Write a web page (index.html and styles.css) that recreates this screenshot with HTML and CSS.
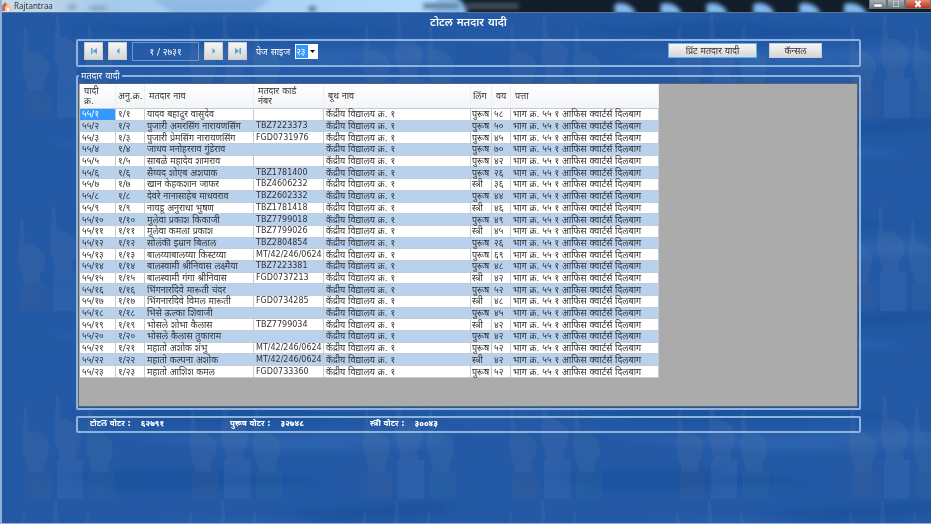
FILE: index.html
```html
<!DOCTYPE html>
<html lang="mr">
<head>
<meta charset="utf-8">
<title>Rajtantraa</title>
<link rel="stylesheet" href="styles.css">
</head>
<body>
<svg class="backdrop" aria-hidden="true">
  <defs>
    <filter id="soft" x="-20%" y="-50%" width="140%" height="200%"><feGaussianBlur stdDeviation="12 3"/></filter>
    <path id="fist" d="M2 2Q4-1 5 2L7 26Q11 23 14 27Q18 25 20 30Q26 32 27 40Q28 48 22 58L23 66H6Q5 58 1 48Q-1 40 1 30Z"/>
    <g id="hands">
      <use href="#fist" y="12" fill="#7e8fa5"/><rect x="3" y="78" width="26" height="27" fill="#6b6680"/>
      <use href="#fist" x="32" fill="#8592b0"/><rect x="35" y="66" width="26" height="39" fill="#6f95cc"/>
      <use href="#fist" x="64" y="12" fill="#7196a8"/><rect x="67" y="78" width="26" height="27" fill="#44809a"/>
    </g>
    <g id="band"><use href="#hands" x="22"/><use href="#hands" x="189"/><use href="#hands" x="363"/><use href="#hands" x="509"/><use href="#hands" x="676"/><use href="#hands" x="849"/></g>
    <pattern id="waves" width="487" height="192" patternUnits="userSpaceOnUse">
      <g filter="url(#soft)">
        <path d="M60 28L240 22L440 32L200 40Z" fill="#1e529e"/>
        <path d="M120 54L440 46V62L300 68Z" fill="#2b62ad"/>
        <path d="M50 90L190 84L340 98L130 108Z" fill="#1f539f"/>
        <path d="M280 128L450 116V130L330 138Z" fill="#1e529e"/>
        <path d="M50 142L260 136L420 154L180 164Z" fill="#2b62ad"/>
      </g>
    </pattern>
  </defs>
  <rect width="100%" height="100%" fill="url(#waves)"/>
  <g opacity=".12"><use href="#band" y="13"/><use href="#band" x="-4" y="206"/><use href="#band" y="394"/><use href="#band" x="-2" y="500"/></g>
</svg>

<header class="titlebar">
  <svg class="glass" width="931" height="12" preserveAspectRatio="none" viewBox="0 0 931 12" aria-hidden="true">
    <defs>
      <filter id="blur"><feGaussianBlur stdDeviation="2"/></filter>
      <linearGradient id="sky"><stop offset="0" stop-color="#c9dcea"/><stop offset=".25" stop-color="#a3c9ec"/><stop offset="1" stop-color="#b4dcff"/></linearGradient>
    </defs>
    <rect width="931" height="12" fill="#111d29"/>
    <rect width="443" height="12" fill="url(#sky)"/>
    <g filter="url(#blur)">
      <path d="M436-4H452Q465 0 466 16H430Z" fill="#8fc0ef"/>
      <path d="M150-2L172 14H250L270-2Z" fill="#8ebbe4"/>
      <ellipse cx="70" cy="7" rx="5" ry="3" fill="#8ca9c2"/><ellipse cx="96" cy="8" rx="10" ry="2" fill="#809db9"/>
      <ellipse cx="311" cy="9" rx="4" ry="3" fill="#5c7892"/>
      <rect x="422" y="3" width="36" height="6" fill="#64839f"/><rect x="466" y="3" width="52" height="6" fill="#424f5b"/>
      <path d="M614 14V4Q628 0 636 14Z" fill="#82baf2"/><path d="M660 14V4Q674 0 682 14Z" fill="#82baf2"/><path d="M753 14V4Q767 0 775 14Z" fill="#82baf2"/><path d="M706 14V4Q720 0 728 14Z" fill="#82baf2"/><path d="M799 14V4Q813 0 821 14Z" fill="#82baf2"/><path d="M844 14V4Q858 0 868 14Z" fill="#82baf2"/>
    </g>
  </svg>
  <svg class="app-icon" width="10" height="9" viewBox="0 0 10 9" aria-hidden="true"><path d="M0 4L3 0L6 4V9H0Z" fill="#c96a4a"/><path d="M3 5L6 2L10 5V9H3Z" fill="#f4c79e"/><path d="M5 6H7V9H5Z" fill="#fff"/></svg>
  <span class="app-name">Rajtantraa</span>
  <div class="window-buttons">
    <button class="win" aria-label="Minimize"><svg width="8" height="8" viewBox="0 0 8 8"><path d="M0 4H8V7H0Z" fill="#fff" stroke="#566" stroke-width=".5"/></svg></button>
    <button class="win" aria-label="Maximize"><svg width="8" height="8" viewBox="0 0 8 8"><rect x="1.500" y="1.500" width="5" height="5" fill="none" stroke="#b9c3cc" stroke-width="1"/></svg></button>
    <button class="win close" aria-label="Close"><svg width="8" height="8" viewBox="0 0 8 8"><path d="M1.500 1L6.500 7M6.500 1L1.500 7" stroke="#fff" stroke-width="2"/></svg></button>
  </div>
</header>

<main class="form">
  <h1>टोटल मतदार यादी</h1>
  <section class="panel toolbar">
    <button class="nav" aria-label="First page"><svg width="8" height="6" viewBox="0 0 10 8"><path d="M1 0H3V8H1ZM9 0V8L3 4Z" fill="#5aa5d8"/></svg></button>
    <button class="nav" aria-label="Previous page"><svg width="8" height="6" viewBox="0 0 10 8"><path d="M7 0V8L3 4Z" fill="#5aa5d8"/></svg></button>
    <input class="page-number" aria-label="Page" value="१ / २७३१">
    <button class="nav" aria-label="Next page"><svg width="8" height="6" viewBox="0 0 10 8"><path d="M3 0V8L7 4Z" fill="#5aa5d8"/></svg></button>
    <button class="nav" aria-label="Last page"><svg width="8" height="6" viewBox="0 0 10 8"><path d="M1 0V8L7 4ZM7 0H9V8H7Z" fill="#5aa5d8"/></svg></button>
    <label class="size-label" for="size">पेज साइज</label>
    <span class="combo"><select id="size"><option>२३</option></select><svg width="5" height="3" viewBox="0 0 5 3" aria-hidden="true"><path d="M0 0H5L2.500 3Z" fill="#111"/></svg></span>
    <button class="action print">प्रिंट मतदार यादी</button>
    <button class="action cancel">कॅन्सल</button>
  </section>

  <fieldset class="voters">
    <legend>मतदार यादी</legend>
    <div class="grid">
      <table>
        <colgroup><col class="c-list"><col class="c-serial"><col class="c-name"><col class="c-card"><col class="c-booth"><col class="c-sex"><col class="c-age"><col class="c-address"></colgroup>
        <thead><tr><th>यादी<br>क्र.</th><th>अनु.क्र.</th><th>मतदार नाव</th><th>मतदार कार्ड<br>नंबर</th><th>बूथ नाव</th><th>लिंग</th><th>वय</th><th>पत्ता</th></tr></thead>
        <tbody>
<tr><td class="selected">५५/१</td><td>१/१</td><td>यादव बहादुर वासुदेव</td><td class="card"></td><td>केंद्रीय विद्यालय क्र. १</td><td>पुरूष</td><td>५८</td><td>भाग क्र. ५५ १ आफिस क्वार्टर्स दिलबाग</td></tr>
<tr><td>५५/२</td><td>१/२</td><td>पुजारी अमरसिंग नारायणसिंग</td><td class="card">TBZ7223373</td><td>केंद्रीय विद्यालय क्र. १</td><td>पुरूष</td><td>५०</td><td>भाग क्र. ५५ १ आफिस क्वार्टर्स दिलबाग</td></tr>
<tr><td>५५/३</td><td>१/३</td><td>पुजारी प्रेमसिंग नारायणसिंग</td><td class="card">FGD0731976</td><td>केंद्रीय विद्यालय क्र. १</td><td>पुरूष</td><td>४५</td><td>भाग क्र. ५५ १ आफिस क्वार्टर्स दिलबाग</td></tr>
<tr><td>५५/४</td><td>१/४</td><td>जाधव मनोहरराव गुंडेराव</td><td class="card"></td><td>केंद्रीय विद्यालय क्र. १</td><td>पुरूष</td><td>७०</td><td>भाग क्र. ५५ १ आफिस क्वार्टर्स दिलबाग</td></tr>
<tr><td>५५/५</td><td>१/५</td><td>साबळे महादेव शामराव</td><td class="card"></td><td>केंद्रीय विद्यालय क्र. १</td><td>पुरूष</td><td>४२</td><td>भाग क्र. ५५ १ आफिस क्वार्टर्स दिलबाग</td></tr>
<tr><td>५५/६</td><td>१/६</td><td>सैय्यद शोएब अशपाक</td><td class="card">TBZ1781400</td><td>केंद्रीय विद्यालय क्र. १</td><td>पुरूष</td><td>२६</td><td>भाग क्र. ५५ १ आफिस क्वार्टर्स दिलबाग</td></tr>
<tr><td>५५/७</td><td>१/७</td><td>खान केहकशान जाफर</td><td class="card">TBZ4606232</td><td>केंद्रीय विद्यालय क्र. १</td><td>स्त्री</td><td>३६</td><td>भाग क्र. ५५ १ आफिस क्वार्टर्स दिलबाग</td></tr>
<tr><td>५५/८</td><td>१/८</td><td>देवरे नानासाहेब माधवराव</td><td class="card">TBZ2602332</td><td>केंद्रीय विद्यालय क्र. १</td><td>पुरूष</td><td>४४</td><td>भाग क्र. ५५ १ आफिस क्वार्टर्स दिलबाग</td></tr>
<tr><td>५५/९</td><td>१/९</td><td>नायडू अनुराधा भुषण</td><td class="card">TBZ1781418</td><td>केंद्रीय विद्यालय क्र. १</td><td>स्त्री</td><td>४६</td><td>भाग क्र. ५५ १ आफिस क्वार्टर्स दिलबाग</td></tr>
<tr><td>५५/१०</td><td>१/१०</td><td>मुलेवा प्रकाश किकाजी</td><td class="card">TBZ7799018</td><td>केंद्रीय विद्यालय क्र. १</td><td>पुरूष</td><td>४९</td><td>भाग क्र. ५५ १ आफिस क्वार्टर्स दिलबाग</td></tr>
<tr><td>५५/११</td><td>१/११</td><td>मुलेवा कमला प्रकाश</td><td class="card">TBZ7799026</td><td>केंद्रीय विद्यालय क्र. १</td><td>स्त्री</td><td>४५</td><td>भाग क्र. ५५ १ आफिस क्वार्टर्स दिलबाग</td></tr>
<tr><td>५५/१२</td><td>१/१२</td><td>सोलंकी इम्रान बिलाल</td><td class="card">TBZ2804854</td><td>केंद्रीय विद्यालय क्र. १</td><td>पुरूष</td><td>२६</td><td>भाग क्र. ५५ १ आफिस क्वार्टर्स दिलबाग</td></tr>
<tr><td>५५/१३</td><td>१/१३</td><td>बालय्याबालय्या किस्टय्या</td><td class="card">MT/42/246/0624</td><td>केंद्रीय विद्यालय क्र. १</td><td>पुरूष</td><td>६९</td><td>भाग क्र. ५५ १ आफिस क्वार्टर्स दिलबाग</td></tr>
<tr><td>५५/१४</td><td>१/१४</td><td>बालस्वामी श्रीनिवास लक्ष्मैया</td><td class="card">TBZ7223381</td><td>केंद्रीय विद्यालय क्र. १</td><td>पुरूष</td><td>४८</td><td>भाग क्र. ५५ १ आफिस क्वार्टर्स दिलबाग</td></tr>
<tr><td>५५/१५</td><td>१/१५</td><td>बालस्वामी गंगा श्रीनिवास</td><td class="card">FGD0737213</td><td>केंद्रीय विद्यालय क्र. १</td><td>स्त्री</td><td>४२</td><td>भाग क्र. ५५ १ आफिस क्वार्टर्स दिलबाग</td></tr>
<tr><td>५५/१६</td><td>१/१६</td><td>भिंगनारदिवे मारूती चंदर</td><td class="card"></td><td>केंद्रीय विद्यालय क्र. १</td><td>पुरूष</td><td>५२</td><td>भाग क्र. ५५ १ आफिस क्वार्टर्स दिलबाग</td></tr>
<tr><td>५५/१७</td><td>१/१७</td><td>भिंगनारदिवे विमल मारूती</td><td class="card">FGD0734285</td><td>केंद्रीय विद्यालय क्र. १</td><td>स्त्री</td><td>४८</td><td>भाग क्र. ५५ १ आफिस क्वार्टर्स दिलबाग</td></tr>
<tr><td>५५/१८</td><td>१/१८</td><td>भिसे ऊल्का शिवाजी</td><td class="card"></td><td>केंद्रीय विद्यालय क्र. १</td><td>पुरूष</td><td>४५</td><td>भाग क्र. ५५ १ आफिस क्वार्टर्स दिलबाग</td></tr>
<tr><td>५५/१९</td><td>१/१९</td><td>भोसले शोभा कैलास</td><td class="card">TBZ7799034</td><td>केंद्रीय विद्यालय क्र. १</td><td>स्त्री</td><td>४२</td><td>भाग क्र. ५५ १ आफिस क्वार्टर्स दिलबाग</td></tr>
<tr><td>५५/२०</td><td>१/२०</td><td>भोसले कैलास तुकाराम</td><td class="card"></td><td>केंद्रीय विद्यालय क्र. १</td><td>पुरूष</td><td>४२</td><td>भाग क्र. ५५ १ आफिस क्वार्टर्स दिलबाग</td></tr>
<tr><td>५५/२१</td><td>१/२१</td><td>महातो अशोक शंभु</td><td class="card">MT/42/246/0624</td><td>केंद्रीय विद्यालय क्र. १</td><td>पुरूष</td><td>५२</td><td>भाग क्र. ५५ १ आफिस क्वार्टर्स दिलबाग</td></tr>
<tr><td>५५/२२</td><td>१/२२</td><td>महातो कल्पना अशोक</td><td class="card">MT/42/246/0624</td><td>केंद्रीय विद्यालय क्र. १</td><td>स्त्री</td><td>४२</td><td>भाग क्र. ५५ १ आफिस क्वार्टर्स दिलबाग</td></tr>
<tr><td>५५/२३</td><td>१/२३</td><td>महातो आशिश कमल</td><td class="card">FGD0733360</td><td>केंद्रीय विद्यालय क्र. १</td><td>पुरूष</td><td>५२</td><td>भाग क्र. ५५ १ आफिस क्वार्टर्स दिलबाग</td></tr>
        </tbody>
      </table>
    </div>
  </fieldset>

  <footer class="panel totals">
    <p><span>टोटल वोटर :</span><b>६२७९१</b></p>
    <p><span>पुरूष वोटर :</span><b>३२७४८</b></p>
    <p><span>स्त्री वोटर :</span><b>३००४३</b></p>
  </footer>
</main>
</body>
</html>
```
FILE: styles.css
```css
* { box-sizing: border-box; }

body {
  margin: 0;
  min-height: 100vh;
  background: #2459a5;
  color: #333;
  font: 9px/10px "DejaVu Sans", "Noto Sans", sans-serif;
  border: 1px solid #8fb2da;
  border-width: 0 0 1px 2px;
}

button, input, select { font: inherit; margin: 0; }

.backdrop {
  position: absolute;
  inset: 0;
  z-index: -1;
  width: 100%;
  height: 100%;
}

.titlebar {
  position: relative;
  display: flex;
  align-items: center;
  gap: 2px;
  height: 13px;
  border-bottom: 1px solid #56779b;
  overflow: hidden;
}
.glass { position: absolute; inset: 0; width: 100%; z-index: -1; }
.app-name { font: 8px/10px "Noto Sans", sans-serif; color: #333; }
.window-buttons { display: flex; align-self: flex-start; margin-left: auto; }
.win {
  display: flex;
  align-items: center;
  justify-content: center;
  width: 18px;
  height: 9px;
  padding: 0;
  border: 1px solid #65717b;
  border-top: 0;
  background: linear-gradient(#a7afb6, #6e7880);
}
.close { width: 26px; background: linear-gradient(#d98a77, #bd3218); }

.form { padding: 2px 70px 0 74px; }

h1 {
  margin: 0 0 9px;
  font-size: 11px;
  line-height: 15px;
  font-weight: 600;
  color: #fff;
  text-align: center;
}

.panel {
  border: 2px solid #8eb3df;
  border-radius: 2px;
}

.toolbar {
  display: flex;
  align-items: flex-start;
  gap: 5px;
  height: 28px;
  padding: 1px 37px 0 6px;
}
.nav, .action {
  display: flex;
  align-items: center;
  justify-content: center;
  padding: 0;
  border: 1px solid #c9ccd0;
  background: linear-gradient(#f6f6f6, #d6d6d6);
  color: #333;
}
.nav { width: 19px; height: 18px; }
.page-number {
  width: 67px;
  height: 19px;
  padding: 0;
  border: 1px solid #6f97cc;
  background: transparent;
  color: #fff;
  text-align: center;
}
.size-label { margin: 5px 0 0 4px; color: #fff; white-space: nowrap; }
.combo { position: relative; height: 15px; margin-top: 2px; }
.combo select {
  appearance: none;
  width: 23px;
  height: 15px;
  padding: 0;
  border: 1px solid #fff;
  border-radius: 0;
  background: linear-gradient(#3399ff, #3399ff) left / 12px 13px no-repeat #fff;
  color: #fff;
}
.combo svg { position: absolute; right: 3px; top: 6px; }
.action { height: 15px; margin-top: 1px; }
.print { width: 89px; margin-left: auto; border-color: #5cb6e8; }
.cancel { width: 53px; margin-left: 7px; }

.voters {
  min-width: 0;
  margin: 4px 0 6px;
  padding: 2px 1px 1px 0;
  border: 2px solid #8eb3df;
  border-radius: 2px;
}
.voters legend {
  margin-left: 1px;
  padding: 0 2px;
  line-height: 10px;
  color: #fff;
}
.grid {
  padding: 0 0 28px 1px;
  border: 1px solid #596470;
  background: #ababab;
}

table {
  width: 579px;
  height: 294px;
  table-layout: fixed;
  border-collapse: separate;
  border-spacing: 0;
  background: #fff;
}
.c-list { width: 36px; }
.c-serial { width: 29px; }
.c-name { width: 109px; }
.c-card { width: 70px; }
.c-booth { width: 147px; }
.c-sex { width: 21px; }
.c-age { width: 19px; }
.c-address { width: 148px; }

th, td {
  padding: 0 0 0 2px;
  border: 1px solid #c4cbd3;
  border-width: 0 1px 1px 0;
  text-align: left;
  white-space: nowrap;
}
th {
  height: 25px;
  padding-left: 4px;
  border-right-color: #eceef0;
  background: linear-gradient(#fff, #f3f4f6);
  font-weight: 400;
}
th:nth-child(2), th:nth-child(6) { padding-left: 2px; }
td { line-height: 10px; }
td:nth-child(6) { padding-left: 1px; }
td.card { font-size: 8px; overflow: hidden; }
tbody tr:nth-child(even) { background: #b8d1ec; }
td.selected { background: #3399ff; color: #fff; }

.totals {
  display: flex;
  height: 17px;
  padding: 1px 12px 0;
  color: #fff;
  font-size: 8px;
  font-weight: 700;
}
.totals p { display: flex; gap: 10px; width: 140px; margin: 0; white-space: nowrap; }
```
